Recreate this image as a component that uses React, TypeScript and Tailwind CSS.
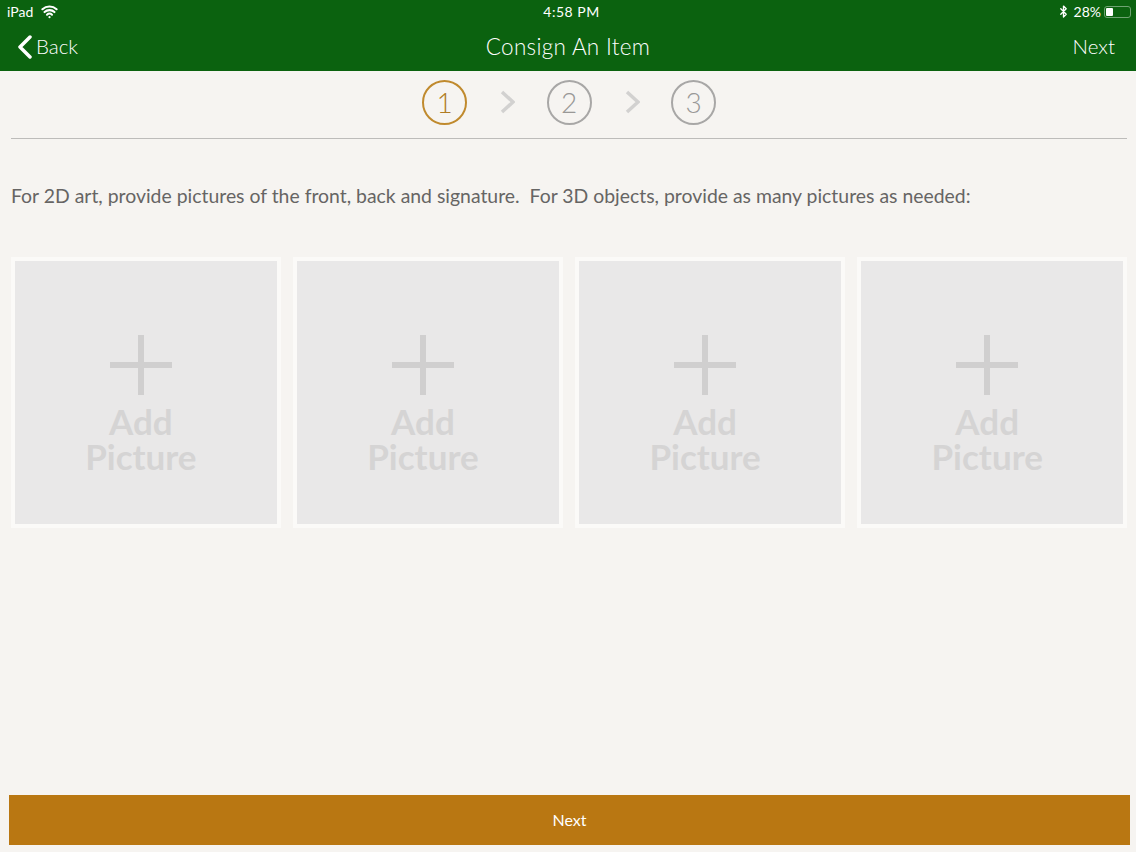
import { Bluetooth, Wifi } from "lucide-react";

const steps = [1, 2, 3];
const slots = ["front", "back", "signature", "extra"];

function AddPicture() {
  return (
    <div className="flex h-[271px] flex-col items-center border-4 border-[#fbfaf8] bg-[#e9e8e8] pr-[10px] pt-[74px]">
      <div className="relative h-[60px] w-[62px]">
        <div className="absolute left-[28px] top-0 h-[60px] w-[6px] bg-[#d0cfcf]" />
        <div className="absolute left-0 top-[27px] h-[6px] w-[62px] bg-[#d0cfcf]" />
      </div>
      <div className="mt-[9px] text-center text-[35px] font-bold leading-[35px] text-[#d5d4d4]">
        Add
        <br />
        Picture
      </div>
    </div>
  );
}

export default function App() {
  return (
    <div className="flex h-[852px] w-[1136px] flex-col overflow-hidden bg-[#f6f4f1] font-['Lato',sans-serif]">
      <header className="h-[71px] bg-[#0b620f] text-white">
        <div className="grid h-[23px] grid-cols-3 items-center pl-[7px] pr-[5px] text-[14px]">
          <div className="flex items-center gap-[8px]">
            <span>iPad</span>
            <Wifi size={17} strokeWidth={3} />
          </div>
          <span className="pl-[5px] text-center tracking-[0.5px]">4:58 PM</span>
          <div className="flex items-center justify-end">
            <Bluetooth size={13} strokeWidth={2.5} />
            <span className="ml-[4px]">28%</span>
            <div className="ml-[3px] flex h-[12px] w-[27px] items-center rounded-[3px] border border-[#6fa372] p-[1px]">
              <div className="h-full w-[7px] rounded-[1px] bg-white" />
            </div>
          </div>
        </div>
        <div className="grid h-[48px] grid-cols-3 items-center pb-[1px] pr-[21px] text-[20.5px] font-light">
          <div className="flex items-center pl-[18px]">
            <svg width="14" height="24" viewBox="0 0 14 24" fill="none" stroke="currentColor" strokeWidth="3.5" strokeLinecap="round" strokeLinejoin="round">
              <polyline points="12,2 2,12 12,22" />
            </svg>
            <span className="ml-[4px]">Back</span>
          </div>
          <span className="pl-[21px] text-center text-[22.5px] tracking-[0.3px]">Consign An Item</span>
          <span className="text-right">Next</span>
        </div>
      </header>

      <main className="flex flex-1 flex-col pl-[11px] pr-[9px]">
        <div className="flex h-[68px] items-center justify-center gap-[31.5px] border-b border-[#bdbcba] pb-[5px]">
          {steps.map((step) => (
            <div key={step} className="flex items-center gap-[33px]">
              <div
                className={
                  step === 1
                    ? "flex h-[45px] w-[45px] items-center justify-center rounded-full border-2 border-[#c08a2e] text-[28px] font-light text-[#b07c24]"
                    : "flex h-[45px] w-[45px] items-center justify-center rounded-full border-2 border-[#a8a7a6] text-[28px] font-light text-[#999897]"
                }
              >
                {step}
              </div>
              {step < 3 && (
                <svg width="15" height="24" viewBox="0 0 15 24" fill="none" stroke="#d2d1d0" strokeWidth="3.5">
                  <polyline points="2,2 13,12 2,22" />
                </svg>
              )}
            </div>
          ))}
        </div>

        <p className="mt-[45px] whitespace-pre text-[19.4px] leading-[24px] text-[#666564]">
          {"For 2D art, provide pictures of the front, back and signature.  For 3D objects, provide as many pictures as needed:"}
        </p>

        <div className="mt-[49px] grid grid-cols-4 gap-[12.5px]">
          {slots.map((slot) => (
            <AddPicture key={slot} />
          ))}
        </div>
      </main>

      <div className="pb-[7px] pl-[9px] pr-[6px]">
        <button type="button" className="h-[50px] w-full bg-[#b97712] text-[16px] text-white">
          Next
        </button>
      </div>
    </div>
  );
}
